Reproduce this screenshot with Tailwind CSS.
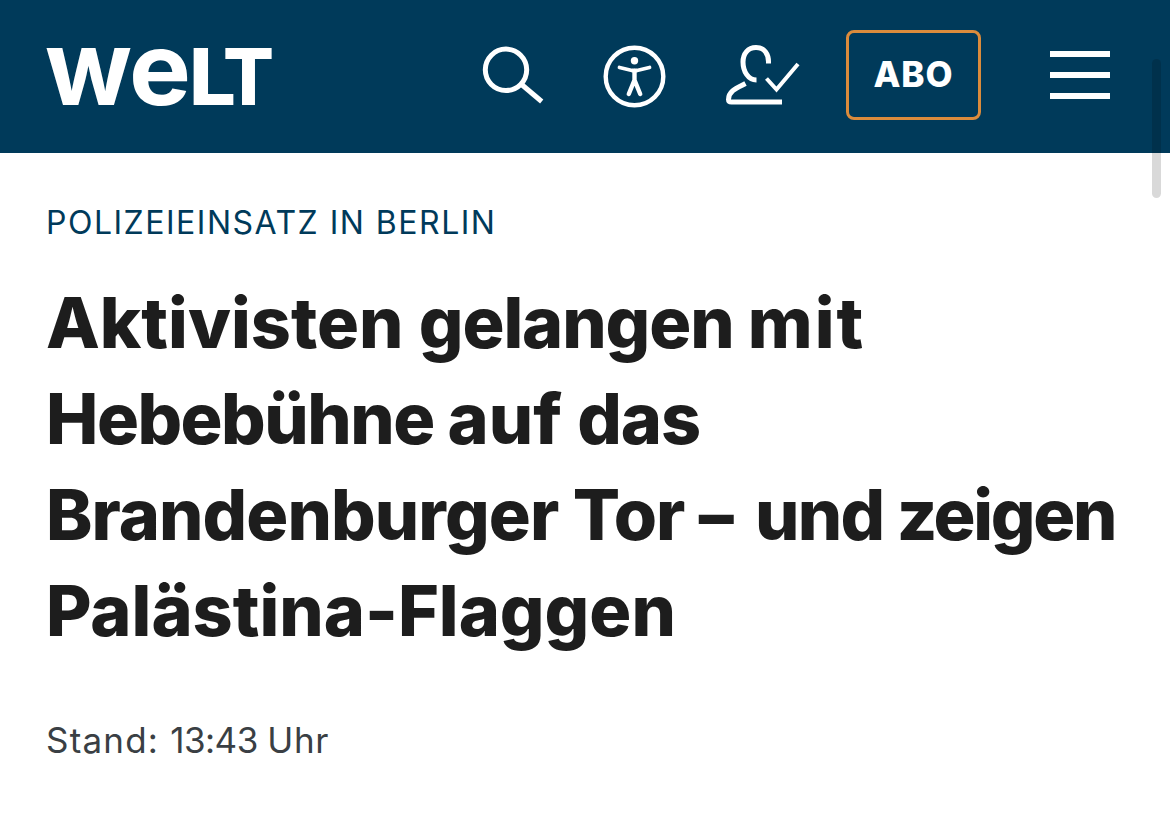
<!DOCTYPE html>
<html lang="de">
<head>
    <meta charset="UTF-8">
    <meta name="viewport" content="width=device-width, initial-scale=1.0">
    <title>Aktivisten gelangen mit Hebebühne auf das Brandenburger Tor - WELT</title>
    <script src="https://cdn.jsdelivr.net/npm/@tailwindcss/browser@4"></script>
</head>
<body class="h-screen overflow-hidden bg-white font-['Inter',sans-serif]">

    <header class="flex h-[153px] items-start bg-[#003a5a] pl-[45px] text-white">
        <a href="#" aria-label="WELT">
            <svg class="h-[153px] w-[230px]" viewBox="0 0 230 153" fill="currentColor" font-family="Inter, sans-serif" font-weight="800">
                <text y="105" font-size="104"><tspan x="0" font-weight="700" textLength="87" lengthAdjust="spacingAndGlyphs">w</tspan><tspan x="84" font-size="101" font-weight="750" textLength="62" lengthAdjust="spacingAndGlyphs">e</tspan><tspan x="144" font-size="78.5" textLength="47" lengthAdjust="spacingAndGlyphs">L</tspan><tspan x="178" font-size="78.5" textLength="51" lengthAdjust="spacingAndGlyphs">T</tspan></text>
            </svg>
        </a>

        <nav class="ml-[205px] flex items-start">
            <a href="#" aria-label="Suche" class="mt-[44px]">
                <svg class="h-[62px] w-[66px]" viewBox="480 44 66 62" fill="none" stroke="currentColor" stroke-width="5">
                    <circle cx="506" cy="69.800" r="20.700" />
                    <path d="M521 84l20.700 17.500" />
                </svg>
            </a>
            <a href="#" aria-label="Barrierefreiheit" class="mt-[44px] ml-[56px]">
                <svg class="h-[66px] w-[66px]" viewBox="602 44 66 66" fill="none" stroke="currentColor" stroke-linecap="round" stroke-linejoin="round">
                    <circle cx="634.500" cy="76.500" r="28.800" stroke-width="4.400" />
                    <circle cx="634.500" cy="60.700" r="3.700" fill="currentColor" stroke="none" />
                    <path d="M619.500 67.500l12.500 3h5l12.500-3" stroke-width="3.800" />
                    <path d="M634.500 71v9l-5.700 14M634.500 80l5.700 14" stroke-width="4.400" />
                </svg>
            </a>
            <a href="#" aria-label="Mein Konto" class="mt-[42px] ml-[56px]">
                <svg class="h-[66px] w-[78px]" viewBox="724 42 78 66" fill="none" stroke="currentColor" stroke-width="5">
                    <path d="M768.500 63.500C769 53.500 764 47.500 756 47.500S743 53.500 743 62C743 71 748 80 756.500 80" />
                    <path d="M745.500 83.500C737 88 728.500 91 728.500 99.500Q728.500 102 731.500 102H782" />
                    <path d="M766.500 78.500l10 11 21.500-25.500" stroke-width="4" />
                </svg>
            </a>
            <a href="#" class="mt-[30px] ml-[44px] flex h-[90px] w-[135px] items-center justify-center rounded-[8px] border-3 border-[#db8b3c] pb-[2px] text-[35px] font-extrabold tracking-[1px]">ABO</a>
            <a href="#" aria-label="Menü" class="mt-[51px] ml-[69px] flex w-[60px] flex-col gap-[15px]">
                <span class="h-[6px] bg-white"></span>
                <span class="h-[6px] bg-white"></span>
                <span class="h-[6px] bg-white"></span>
            </a>
        </nav>
    </header>

    <main class="pt-[49px] pl-[46px]">
        <p class="text-[32px] leading-[42px] tracking-[1.5px] text-[#003a5a] uppercase whitespace-nowrap">Polizeieinsatz in Berlin</p>
        <!-- words are tracked one by one -->
        <h1 class="mt-[31px] text-[70px] leading-[96px] font-extrabold whitespace-nowrap text-[#1d1d1d]">
            Aktivisten <span class="tracking-[-1.1px]">gelangen </span><span class="tracking-[2px]">mit</span><br>
            <span class="tracking-[-1.5px]">Hebebühne </span>auf <span class="tracking-[-1px]">das</span><br>
            <span class="tracking-[-0.9px]">Brandenburger </span><span class="tracking-[-1px]">Tor </span><span class="tracking-[3px]">– </span><span class="tracking-[-1.8px]">und </span><span class="tracking-[-2.3px]">zeigen</span><br>
            Palästina-Flaggen
        </h1>
        <p class="mt-[57px] text-[35px] leading-[48px] whitespace-nowrap text-[#3a3f44]"><span class="tracking-[1.2px]">Stand: </span><span class="tracking-[-0.5px]">13:43 </span><span class="tracking-[0.7px]">Uhr</span></p>
    </main>

    <!-- scrollbar thumb over the page -->
    <div class="absolute top-[59px] right-[9px] h-[139px] w-[9px] rounded-full bg-black/15"></div>

</body>
</html>
